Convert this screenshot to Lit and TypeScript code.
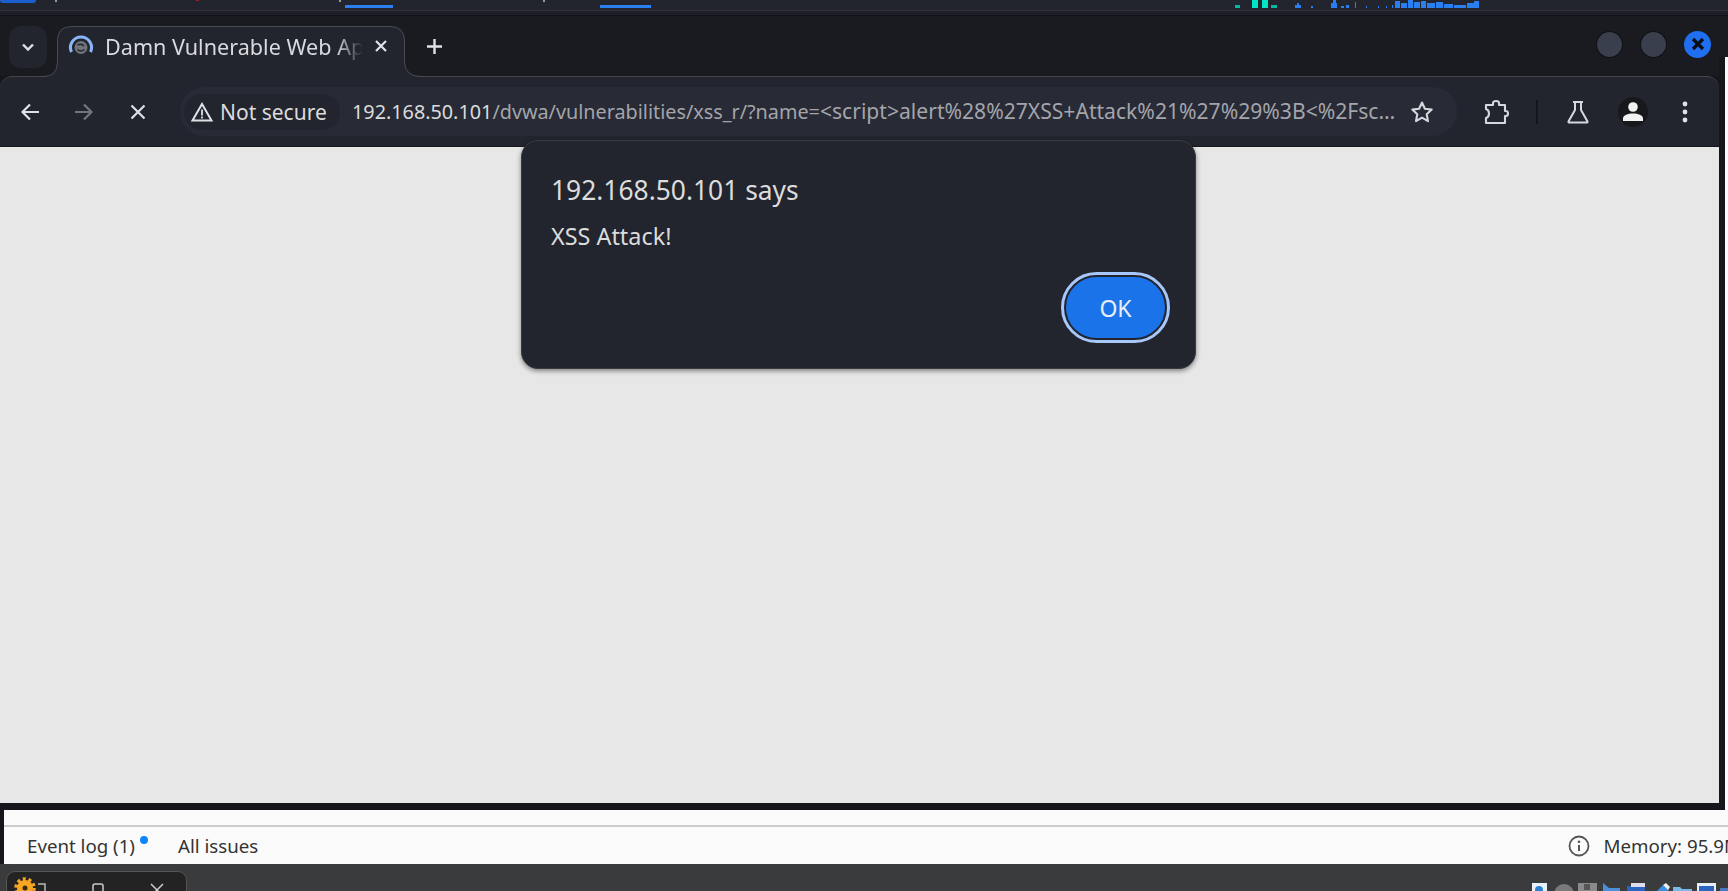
import { LitElement, html, css, svg } from "lit";
import { customElement } from "lit/decorators.js";

const graph = [
  [1235, 5, 5, "#00b89f"], [1252, 0, 6, "#00e5c4"], [1262, 0, 6, "#00e5c4"], [1271, 5, 6, "#00b89f"],
  [1297, 3, 2, "#2a7ff0"], [1295, 5, 6, "#2a7ff0"], [1311, 6, 2, "#2a7ff0"], [1331, 3, 6, "#2a7ff0"], [1333, 0, 3, "#2a7ff0"],
  [1341, 6, 3, "#2a7ff0"], [1346, 5, 3, "#2a7ff0"], [1355, 2, 1, "#2a7ff0"], [1366, 6, 1, "#2a7ff0"], [1378, 6, 1, "#2a7ff0"],
  [1386, 6, 1, "#2a7ff0"], [1392, 5, 1, "#2a7ff0"],
  [1395, 1, 5, "#2a7ff0"], [1401, 3, 6, "#2a7ff0"], [1408, 0, 5, "#2a7ff0"], [1414, 2, 6, "#2a7ff0"], [1421, 1, 5, "#2a7ff0"],
  [1427, 3, 8, "#2a7ff0"], [1436, 2, 7, "#2a7ff0"], [1444, 4, 9, "#2a7ff0"], [1454, 5, 12, "#2a7ff0"], [1467, 3, 7, "#2a7ff0"], [1474, 1, 5, "#2a7ff0"],
] as const;

@customElement("app-root")
export class AppRoot extends LitElement {
  static styles = css`
    :host { display: block; width: 1728px; height: 891px; overflow: hidden; font-family: "Noto Sans", sans-serif; background: #15161b; }
    .strip { display: block; width: 1728px; height: 10px; background: #23252e; }
    .sep { height: 6px; box-sizing: border-box; background: #1e1f26; border-top: 1px solid #30323a; border-bottom: 1px solid #101116; }
    .winrow { display: flex; height: 794px; }
    .win { width: 1719px; display: flex; flex-direction: column; background: #14161c; }
    .edge { flex: 1; display: flex; flex-direction: column; }
    .edge-dark { height: 41px; background: #1a1b20; }
    .edge-body { flex: 1; display: flex; }
    .edge-gap { width: 6px; background: #14161c; }
    .edge-white { flex: 1; background: #fafafa; }
    .title { position: relative; z-index: 2; height: 60px; flex: none; display: flex; background: #1a1b20; padding-left: 9px; box-sizing: border-box; }
    .chev { width: 38px; height: 42px; margin-top: 10px; border-radius: 12px; background: #22242e; display: flex; align-items: center; justify-content: center; }
    .tab { position: relative; width: 347px; height: 50px; box-sizing: border-box; padding-bottom: 10px; margin-left: 10px; margin-top: 10px; display: flex; align-items: center; color: #d8dade; }
    .tab-shape { position: absolute; left: -17px; top: 0; width: 385px; height: 52px; }
    .fav { position: relative; width: 26px; height: 24px; margin-left: 11px; flex: none; }
    .tab-title { position: relative; width: 263px; margin-left: 11px; font-size: 21.6px; white-space: nowrap; overflow: hidden; -webkit-mask-image: linear-gradient(90deg, #000 88%, transparent 98%); mask-image: linear-gradient(90deg, #000 88%, transparent 98%); }
    .tab-x { position: relative; display: flex; margin-left: 6px; }
    .plus { margin-left: 22px; margin-top: 22px; height: 20px; }
    .ctrls { margin-left: auto; display: flex; align-items: center; gap: 19px; margin-top: -4px; padding-right: 8px; }
    .dot { width: 25px; height: 25px; border-radius: 50%; background: #3a3f4d; box-shadow: 0 0 0 1px #101116; }
    .close { width: 27px; height: 27px; border-radius: 50%; background: #1f6ff0; display: flex; align-items: center; justify-content: center; margin-left: -1px; }
    .tool { height: 70px; flex: none; box-sizing: border-box; display: flex; align-items: center; background: #22252e; border-top: 1px solid #43454d; border-radius: 12px 12px 0 0; padding-left: 12px; }
    .ib { width: 36px; height: 36px; flex: none; display: flex; align-items: center; justify-content: center; margin-right: 18px; }
    .pill { width: 1277px; height: 49px; flex: none; margin-left: 6px; border-radius: 25px; background: #282a35; display: flex; align-items: center; box-sizing: border-box; padding-left: 4px; }
    .chip { height: 36px; width: 156px; flex: none; border-radius: 18px; background: #22242e; display: flex; align-items: center; color: #dcdcdc; font-size: 21px; box-sizing: border-box; padding-left: 7px; gap: 7px; white-space: nowrap; }
    .url { width: 1046px; flex: none; margin-left: 12px; font-size: 19.8px; color: #a3a5ab; white-space: nowrap; overflow: hidden; margin-top: -2px; }
    .url b { font-weight: 400; color: #dcdcdc; }
    .url span { font-size: 21.1px; }
    .star { margin-left: 12px; display: flex; }
    .t-ext { margin-left: 26px; display: flex; }
    .t-sep { width: 2px; height: 24px; margin-left: 27px; background: #14161c; }
    .t-flask { margin-left: 28px; display: flex; }
    .t-prof { width: 30px; height: 30px; border-radius: 50%; background: #17181c; margin-left: 28px; display: flex; align-items: center; justify-content: center; }
    .t-more { margin-left: 34px; display: flex; }
    .content { position: relative; flex: none; height: 656px; margin-top: 1px; background: #e7e7e7; }
    .bottom-gap { flex: 1; }
    .dialog { position: absolute; left: 521px; top: -7px; width: 675px; height: 229px; box-sizing: border-box; background: #22242e; border: 1px solid #3a3c40; border-radius: 17px; box-shadow: 0 2px 5px rgba(0,0,0,.45); padding: 31px 23px 0 29px; color: #dcdcdc; display: flex; flex-direction: column; }
    .d-title { font-size: 26.4px; line-height: 36px; }
    .d-msg { font-size: 23.4px; line-height: 28px; margin-top: 14px; }
    .ok { align-self: flex-end; margin-top: 27px; width: 99px; height: 61px; border-radius: 31px; background: #1a73e8; color: #e8eef8; font-size: 23px; display: flex; align-items: center; justify-content: center; outline: 3px solid #a8c7fa; outline-offset: 2px; border: 0; font-family: inherit; margin-right: 7px; padding: 0; }
    .dev { height: 54px; margin-left: 4px; background: #fbfbfb; display: flex; flex-direction: column; box-sizing: border-box; }
    .dev-top { height: 15px; border-bottom: 2px solid #ccc; flex: none; }
    .dev-row { flex: 1; display: flex; align-items: center; padding-left: 23px; font-size: 18.7px; color: #333; white-space: nowrap; }
    .ev { position: relative; }
    .badge { position: absolute; right: -13px; top: 3px; width: 8px; height: 8px; border-radius: 50%; background: #0a84ff; }
    .all { margin-left: 43px; }
    .mem { margin-left: auto; display: flex; align-items: center; gap: 14px; margin-right: -13px; }
    .task { height: 27px; background: #3a3b3d; display: flex; overflow: hidden; box-sizing: border-box; padding: 7px 0 0 6px; }
    .card { width: 181px; height: 40px; background: #232323; border: 1px solid #555; border-radius: 9px; box-sizing: border-box; flex: none; }
    .card svg { display: block; }
    .tray { margin-left: auto; margin-top: 12px; flex: none; display: block; }
    svg { overflow: visible; }
  `;

  render() {
    const ic = "#dfe1e5";
    return html`
      <svg class="strip" viewBox="0 0 1728 10">
        <rect x="0" y="-4" width="36" height="7" rx="3" fill="#1a5fd0"/>
        <rect x="55" y="0" width="2" height="2" fill="#9a9a9a"/>
        <rect x="196" y="0" width="3" height="1" fill="#a02020"/>
        <rect x="339" y="0" width="2" height="2" fill="#9a9a9a"/>
        <rect x="345" y="5" width="48" height="3" fill="#2a7ff0"/>
        <rect x="543" y="0" width="2" height="2" fill="#9a9a9a"/>
        <rect x="600" y="5" width="51" height="3" fill="#2a7ff0"/>
        ${graph.map(([x, y, w, c]) => svg`<rect x=${x} y=${y} width=${w} height=${8 - y} fill=${c}/>`)}
      </svg>
      <div class="sep"></div>
      <div class="winrow">
        <div class="win">
          <div class="title">
            <div class="chev"><svg width="14" height="10" viewBox="0 0 14 10"><path d="M2 2.5l5 5 5-5" fill="none" stroke="${ic}" stroke-width="2.4"/></svg></div>
            <div class="tab">
              <svg class="tab-shape" viewBox="40 26 385 52">
                <path d="M40 76.5H44Q57 76.5 57.5 62V40Q57.5 26.5 72 26.5H390Q404 26.5 404.5 40V62Q405 76.5 421 76.5H425V78H40Z" fill="#22252e"/>
                <path d="M40 76.5H44Q57 76.5 57.5 62V40Q57.5 26.5 72 26.5H390Q404 26.5 404.5 40V62Q405 76.5 421 76.5H425" fill="none" stroke="#4a4c54"/>
              </svg>
              <svg class="fav" viewBox="0 0 26 24">
                <path d="M3.5 18A10.500 10.500 0 1 1 22.500 18" fill="none" stroke="#8ab4f8" stroke-width="3"/>
                <circle cx="13" cy="13.500" r="6.500" fill="#70737a"/>
                <path d="M9.500 11q4-2 6.500 1M16.500 15.500q-4 3-7 0" fill="none" stroke="#22252e" stroke-width="1.400"/>
              </svg>
              <div class="tab-title">Damn Vulnerable Web Application</div>
              <div class="tab-x"><svg width="14" height="14" viewBox="0 0 14 14"><path d="M2 2l10 10M12 2L2 12" stroke="${ic}" stroke-width="2.2"/></svg></div>
            </div>
            <div class="plus"><svg width="17" height="17" viewBox="0 0 17 17"><path d="M8.5 1v15M1 8.5h15" stroke="${ic}" stroke-width="2.4"/></svg></div>
            <div class="ctrls">
              <div class="dot"></div>
              <div class="dot"></div>
              <div class="close"><svg width="14" height="14" viewBox="0 0 14 14"><path d="M2 2l10 10M12 2L2 12" stroke="#0a0d14" stroke-width="3.2"/></svg></div>
            </div>
          </div>
          <div class="tool">
            <div class="ib"><svg width="20" height="20" viewBox="0 0 20 20"><path d="M19 10H3M10 2.500L2.500 10l7.500 7.500" fill="none" stroke="${ic}" stroke-width="2.200"/></svg></div>
            <div class="ib"><svg width="20" height="20" viewBox="0 0 20 20"><path d="M1 10h16M10 2.500l7.500 7.500-7.500 7.500" fill="none" stroke="#72757c" stroke-width="2.200"/></svg></div>
            <div class="ib"><svg width="16" height="16" viewBox="0 0 16 16"><path d="M1.500 1.500l13 13M14.500 1.500l-13 13" stroke="${ic}" stroke-width="2.200"/></svg></div>
            <div class="pill">
              <div class="chip"><svg width="22" height="20" viewBox="0 0 22 20"><path d="M11 2L1.500 18.500h19z" fill="none" stroke="${ic}" stroke-width="2"/><path d="M11 7.500v6M11 14.500v2" stroke="${ic}" stroke-width="1.800"/></svg>Not secure</div>
              <div class="url"><b>192.168.50.101</b>/dvwa/vulnerabilities/xss_r/?name=<span>&lt;script&gt;alert%28%27XSS+Attack%21%27%29%3B&lt;%2Fsc…</span></div>
              <div class="star"><svg width="24" height="24" viewBox="0 0 24 24"><path d="M12 2.500l2.900 6.300 6.800.8-5 4.700 1.300 6.800-6-3.400-6 3.400 1.300-6.800-5-4.700 6.800-.8z" fill="none" stroke="#d5d7db" stroke-width="2.100" stroke-linejoin="round"/></svg></div>
            </div>
            <div class="t-ext"><svg width="26" height="26" viewBox="0 0 26 26"><path d="M3 6h7V4q0-2 3-2t3 2v2h6v6h1q2 0 2 2.500T23 17h-1v7H3v-5q3-1 3-4.500T3 10z" fill="none" stroke="#d5d7db" stroke-width="2.100" stroke-linejoin="round"/></svg></div>
            <div class="t-sep"></div>
            <div class="t-flask"><svg width="24" height="24" viewBox="0 0 24 24"><path d="M7 2h10M9 2v8L2.500 21.500q-.3 1 1 1h17q1.300 0 1-1L15 10V2" fill="none" stroke="#d5d7db" stroke-width="2"/></svg></div>
            <div class="t-prof"><svg width="22" height="20" viewBox="0 0 22 20"><circle cx="11" cy="5" r="4.800" fill="#f2f2f2"/><path d="M1 19v-2.500C1 13 6 11.500 11 11.500s10 1.500 10 5V19z" fill="#f2f2f2"/></svg></div>
            <div class="t-more"><svg width="6" height="22" viewBox="0 0 6 22"><circle cx="3" cy="3" r="2.400" fill="${ic}"/><circle cx="3" cy="11" r="2.400" fill="${ic}"/><circle cx="3" cy="19" r="2.400" fill="${ic}"/></svg></div>
          </div>
          <div class="content">
            <div class="dialog">
              <div class="d-title">192.168.50.101 says</div>
              <div class="d-msg">XSS Attack!</div>
              <button class="ok">OK</button>
            </div>
          </div>
          <div class="bottom-gap"></div>
        </div>
        <div class="edge">
          <div class="edge-dark"></div>
          <div class="edge-body"><div class="edge-gap"></div><div class="edge-white"></div></div>
        </div>
      </div>
      <div class="dev">
        <div class="dev-top"></div>
        <div class="dev-row">
          <span class="ev">Event log (1)<i class="badge"></i></span>
          <span class="all">All issues</span>
          <span class="mem">
            <svg width="22" height="22" viewBox="0 0 22 22"><circle cx="11" cy="11" r="9.500" fill="none" stroke="#555" stroke-width="1.800"/><path d="M11 10v6" stroke="#555" stroke-width="2"/><circle cx="11" cy="6.800" r="1.300" fill="#555"/></svg>
            Memory: 95.9M
          </span>
        </div>
      </div>
      <div class="task">
        <div class="card">
          <svg width="179" height="38" viewBox="0 0 179 38">
            <circle cx="18" cy="16" r="8" fill="#f5a623"/>
            <circle cx="18" cy="16" r="9" fill="none" stroke="#f5a623" stroke-width="3.500" stroke-dasharray="3 2.700"/>
            <circle cx="18" cy="16" r="2.500" fill="#3a2a10"/>
            <path d="M31 12h7v14h-7" fill="none" stroke="#bbb" stroke-width="1.500"/>
            <rect x="86" y="12" width="10" height="16" rx="2" fill="none" stroke="#ccc" stroke-width="1.500"/>
            <path d="M144 12l12 12M156 12l-12 12" stroke="#ccc" stroke-width="1.500"/>
          </svg>
        </div>
        <svg class="tray" width="197" height="20" viewBox="0 0 197 20">
          <rect x="1" y="0" width="15" height="18" fill="#e8f0fa"/><circle cx="8" cy="7" r="4" fill="#2a7fd0"/>
          <circle cx="33" cy="11" r="10" fill="#7a7a7a"/>
          <rect x="47" y="0" width="19" height="18" fill="#8a8a8a"/><rect x="53" y="1" width="6" height="6" fill="#555"/>
          <path d="M72 0l6 5h11v13H72z" fill="#4a90d9"/>
          <rect x="96" y="3" width="18" height="15" fill="#2a66c0"/><rect x="100" y="0" width="14" height="4" fill="#dde"/>
          <path d="M124 10l8-8 6 5-8 8z" fill="#3a8fe0"/><path d="M132 2l3-2 4 4-2 3z" fill="#eee"/>
          <path d="M142 4h7l2 2h10v12h-19z" fill="#7ab8e8"/>
          <rect x="166" y="0" width="19" height="18" fill="#e8eef6"/><rect x="168" y="3" width="15" height="11" fill="#2a66c0"/>
          <rect x="189" y="5" width="8" height="13" fill="#4a78c0"/>
        </svg>
      </div>
    `;
  }
}
